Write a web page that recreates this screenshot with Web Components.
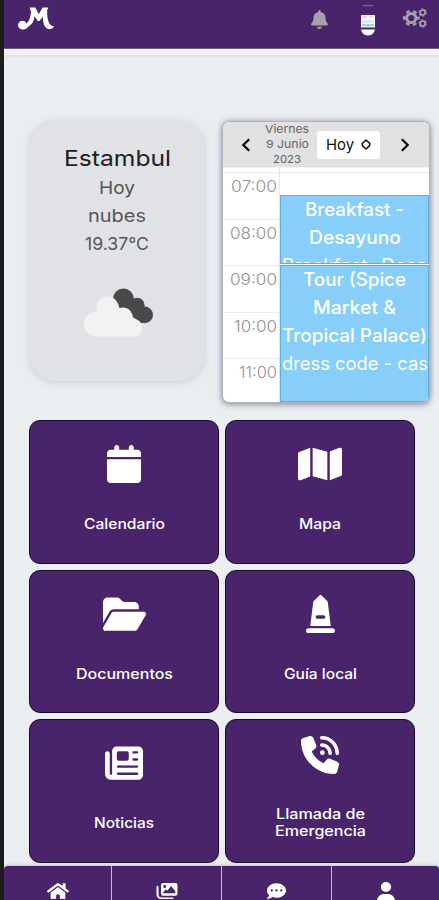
<!DOCTYPE html>
<html lang="es"><head><meta charset="utf-8"><title>Inicio</title>
<style>html,body{margin:0;height:100%;overflow:hidden;background:#eaeef1}body{font-family:Inter,"Open Sans",sans-serif}</style></head>
<body><travel-app></travel-app>
<script>
const define=(name,html,init)=>customElements.define(name,class extends HTMLElement{
  constructor(){super();const t=document.createElement('template');t.innerHTML=html;this.attachShadow({mode:'open'}).append(t.content.cloneNode(true));}
  connectedCallback(){if(init)init(this,this.shadowRoot);}
});
const P={
 bell:['0 0 448 512','<path d="M224 0c-17.7 0-32 14.3-32 32V51.2C119 66 64 130.6 64 208v18.8c0 47-17.3 92.4-48.5 127.6l-7.4 8.3c-8.4 9.4-10.4 22.9-5.3 34.4S19.4 416 32 416H416c12.6 0 24-7.4 29.2-18.9s3.1-25-5.3-34.4l-7.4-8.3C401.3 319.2 384 273.9 384 226.8V208c0-77.4-55-142-128-156.8V32c0-17.7-14.3-32-32-32zm45.3 493.3c12-12 18.7-28.3 18.7-45.3H160c0 17 6.7 33.3 18.7 45.3s28.3 18.7 45.3 18.7s33.3-6.7 45.3-18.7z"/>'],
 gears:['0 0 24 20','<g fill="none" stroke="currentColor"><circle cx="8.3" cy="10" r="4.6" stroke-width="3"/><circle cx="8.3" cy="10" r="7.1" stroke-width="2.4" stroke-dasharray="3.7 3.735" stroke-dashoffset="1.85"/><circle cx="19.7" cy="4.5" r="2.5" stroke-width="1.7"/><circle cx="19.7" cy="4.5" r="3.6" stroke-width="1.1" stroke-dasharray="1.9 1.87"/><circle cx="19.7" cy="15.5" r="2.5" stroke-width="1.7"/><circle cx="19.7" cy="15.5" r="3.6" stroke-width="1.1" stroke-dasharray="1.9 1.87"/></g>'],
 logo:['0 0 38 25','<path d="M12 .5H17.800L21.300 7.500 25.300 .5H31Q31.300 2 30 3.200C29.600 8 30.300 13.500 32.200 17.200Q33.500 19.600 37 20.300C35.800 22.600 33.500 23.400 31 23 26.500 21.500 25.800 16 25.600 10.200L22 14.600H20.300L17 9.600C16.500 14.500 14.500 18.200 10.600 20.400 8.600 23.600 5.500 24 3.300 23.200-.2 22-.9 17.500 1.700 15.300 4 13.600 7.300 14.300 8.300 16.800 10.900 16.300 13 12 13.300 4Q12 3 12 .5Z"/>'],
 avatar:['0 0 16 34','<path fill="#7b6392" d="M3 1h10v1.4H3z"/><path fill="#faf6fc" d="M1 11h14v12.5H1z"/><path fill="#a9dff5" d="M2 16h12v3H2z" opacity=".4"/><path fill="#eeb6dc" d="M3 12h4v2H3zM9 12h4v1.500H9z" opacity=".6"/><path fill="#75d3bd" d="M2 20h12v2.500H2z" opacity=".75"/><path d="M1 25.5h14c-.5 3-3.2 6-7 6s-6.500-3-7-6z"/>'],
 calendar:['0 0 448 512','<path d="M96 32V64H48C21.500 64 0 85.500 0 112v48H448V112c0-26.500-21.500-48-48-48H352V32c0-17.700-14.300-32-32-32s-32 14.300-32 32V64H160V32c0-17.700-14.300-32-32-32S96 14.300 96 32zM448 192H0V464c0 26.500 21.500 48 48 48H400c26.500 0 48-21.500 48-48V192z"/>'],
 map:['0 0 576 512','<path d="M384 476.1L192 421.2V35.9L384 90.8V476.1zm32-1.200V88.400L543.100 37.500c15.800-6.300 32.900 5.300 32.900 22.300V394.600c0 9.800-6 18.600-15.100 22.300L416 474.800zM15.100 95.100L160 37.200V423.600L32.900 474.500C17.100 480.800 0 469.200 0 452.200V117.400c0-9.800 6-18.600 15.100-22.300z"/>'],
 folder:['0 0 576 512','<path d="M88.700 223.800L0 375.800V96C0 60.700 28.700 32 64 32H181.500c17 0 33.300 6.700 45.300 18.700l26.500 26.500c12 12 28.300 18.700 45.300 18.700H416c35.300 0 64 28.700 64 64v32H144c-22.800 0-43.800 12.100-55.300 31.800zm27.600 16.100C122.100 230 132.600 224 144 224H544c11.500 0 22 6.100 27.700 16.100s5.700 22.200-.1 32.100l-112 192C453.900 474 443.400 480 432 480H32c-11.500 0-22-6.100-27.700-16.100s-5.700-22.200 .1-32.100l112-192z"/>'],
 monument:['0 0 384 512','<path d="M180.700 4.700c6.200-6.200 16.400-6.200 22.600 0l80 80c2.500 2.500 4.100 5.800 4.600 9.300l40.200 322H55.900L96.100 94c.4-3.500 2-6.800 4.600-9.300l80-80zM152 272c-13.300 0-24 10.700-24 24s10.700 24 24 24h80c13.300 0 24-10.700 24-24s-10.700-24-24-24H152zM32 448H352c17.700 0 32 14.300 32 32s-14.300 32-32 32H32c-17.700 0-32-14.300-32-32s14.300-32 32-32z"/>'],
 news:['0 0 512 512','<path d="M96 96c0-35.300 28.700-64 64-64H448c35.300 0 64 28.700 64 64V416c0 35.300-28.700 64-64 64H80c-44.200 0-80-35.800-80-80V128c0-17.700 14.300-32 32-32s32 14.300 32 32V400c0 8.800 7.200 16 16 16s16-7.200 16-16V96zm64 24v80c0 13.300 10.700 24 24 24H296c13.300 0 24-10.700 24-24V120c0-13.300-10.700-24-24-24H184c-13.300 0-24 10.700-24 24zm208-8c0 8.800 7.200 16 16 16h48c8.800 0 16-7.200 16-16s-7.200-16-16-16H384c-8.800 0-16 7.200-16 16zm0 96c0 8.800 7.200 16 16 16h48c8.800 0 16-7.200 16-16s-7.200-16-16-16H384c-8.800 0-16 7.200-16 16zM160 304c0 8.800 7.200 16 16 16H432c8.800 0 16-7.200 16-16s-7.200-16-16-16H176c-8.800 0-16 7.200-16 16zm0 96c0 8.800 7.200 16 16 16H432c8.800 0 16-7.200 16-16s-7.200-16-16-16H176c-8.800 0-16 7.200-16 16z"/>'],
 phone:['0 0 512 512','<path d="M280 0C408.100 0 512 103.900 512 232c0 13.300-10.700 24-24 24s-24-10.700-24-24c0-101.600-82.400-184-184-184c-13.300 0-24-10.700-24-24s10.700-24 24-24zm8 192a32 32 0 1 1 0 64 32 32 0 1 1 0-64zm-32-72c0-13.300 10.700-24 24-24c75.100 0 136 60.900 136 136c0 13.300-10.700 24-24 24s-24-10.700-24-24c0-48.600-39.400-88-88-88c-13.300 0-24-10.700-24-24z"/><path d="M164.900 24.600c-7.700-18.600-28-28.500-47.400-23.200l-88 24C12.100 30.200 0 46 0 64C0 311.400 200.600 512 448 512c18 0 33.800-12.100 38.600-29.500l24-88c5.300-19.400-4.600-39.700-23.200-47.400l-96-40c-16.300-6.800-35.200-2.100-46.300 11.600L304.700 368C234.300 334.700 177.300 277.700 144 207.300L193.300 167c13.700-11.200 18.400-30 11.600-46.300l-40-96z"/>'],
 home:['0 0 576 512','<path d="M280.370 148.260L96 300.110V464a16 16 0 0 0 16 16l112.060-.29a16 16 0 0 0 15.920-16V368a16 16 0 0 1 16-16h64a16 16 0 0 1 16 16v95.640a16 16 0 0 0 16 16.050L464 480a16 16 0 0 0 16-16V300L295.670 148.260a12.190 12.190 0 0 0-15.300 0zM571.600 251.470L488 182.560V44.050a12 12 0 0 0-12-12h-56a12 12 0 0 0-12 12v72.610L318.470 43a48 48 0 0 0-61 0L4.340 251.470a12 12 0 0 0-1.600 16.900l25.500 31A12 12 0 0 0 45.150 301l235.220-193.740a12.190 12.190 0 0 1 15.300 0L530.900 301a12 12 0 0 0 16.900-1.600l25.500-31a12 12 0 0 0-1.700-16.930z"/>'],
 images:['0 0 22 18','<path fill-rule="evenodd" d="M7 1h12.500Q21.500 1 21.500 3v9.500q0 2-2 2H7q-2 0-2-2V3Q5 1 7 1zm1.700 2.300a1.500 1.500 0 1 0 0 3 1.500 1.500 0 1 0 0-3zM7.300 12h12V9.500l-4.200-5.200-3.800 5-1.500-1.700-2.500 3.200z"/><path d="M.5 5Q.5 4 1.500 4t1 1v8q0 3.500 3.500 3.500h10.500q1 0 1 .8t-1 .7H5.500Q.5 18 .5 13z"/>'],
 chat:['0 0 512 512','<path fill-rule="evenodd" d="M256 32C114.600 32 0 125.100 0 240c0 49.600 21.400 95 57 130.700C44.500 421.100 2.700 466 2.200 466.500c-2.200 2.300-2.800 5.700-1.500 8.700S4.800 480 8 480c66.300 0 116-31.800 140.600-51.400 32.700 12.300 69 19.400 107.400 19.400 141.400 0 256-93.100 256-208S397.400 32 256 32zM128 208a32 32 0 1 0 0 64 32 32 0 1 0 0-64zm128 0a32 32 0 1 0 0 64 32 32 0 1 0 0-64zm128 0a32 32 0 1 0 0 64 32 32 0 1 0 0-64z"/>'],
 user:['0 0 448 512','<path d="M224 256A128 128 0 1 0 224 0a128 128 0 1 0 0 256zm-45.700 48C79.800 304 0 383.800 0 482.300C0 498.700 13.300 512 29.700 512H418.300c16.400 0 29.700-13.300 29.700-29.700C448 383.800 368.200 304 269.700 304H178.300z"/>'],
 left:['0 0 10 14','<path d="M8.200 1.200 2.300 7l5.900 5.800" fill="none" stroke="currentColor" stroke-width="2.300"/>'],
 right:['0 0 10 14','<path d="M1.800 1.200 7.700 7l-5.900 5.800" fill="none" stroke="currentColor" stroke-width="2.300"/>'],
 sort:['0 0 10 12','<path d="M1.300 4.800 5 1l3.700 3.800v2.400L5 11 1.300 7.200z" fill="none" stroke="currentColor" stroke-width="1.500"/>'],
 cloud:['0 0 70 50','<g fill="#48494b"><circle cx="40" cy="11" r="10.500"/><circle cx="54" cy="17.500" r="7.500"/><circle cx="61.500" cy="27.500" r="8.500"/><path d="M34 18 45 6 66 33 58 36z"/></g><path fill="#f2f2f2" d="M13 49.500h36.500c5.300 0 9.500-2.600 9.700-8.500.1-5.500-3.900-9.400-9.400-10C49.500 23 43 18 36 20.500 34.500 13 29 8.500 24 8.500 16.500 8.500 11.800 15 12.800 23.600 5 24 0 29.500 0 37c0 7.500 5.500 12.500 13 12.500z"/>']
};
define('app-icon','<style>:host{display:block;flex:none}svg{display:block;width:100%;height:100%;fill:currentColor;overflow:visible}</style>',(h,r)=>{
  if(r.querySelector('svg'))return;const [vb,body]=P[h.getAttribute('name')];const [w,t]=h.getAttribute('size').split('x');
  h.style.width=w+'px';h.style.height=t+'px';
  r.innerHTML+=`<svg viewBox="${vb}" preserveAspectRatio="none">${body}</svg>`;});
define('fit-text','<style>:host{display:block;white-space:nowrap;flex:none}span{display:inline-block;transform-origin:0 50%}</style><span><slot></slot></span>',(h,r)=>{
  const w=+h.getAttribute('w'),s=r.querySelector('span');h.style.width=w+'px';
  const fit=()=>{const n=s.offsetWidth;if(n)s.style.transform=`scaleX(${w/s.getBoundingClientRect().width*(new DOMMatrix(getComputedStyle(s).transform).a)})`;};
  requestAnimationFrame(fit);fit();});
define('top-bar',`<style>:host{display:flex;box-sizing:border-box;height:48px;flex:none;background:#49246b;box-shadow:0 1px 0 #6f5b88,0 2px 0 #f0f0f6,0 7px 0 #f0f1f5,0 9px 1px #e1e2eb;color:#fff;padding:7px 12px 0 14px;align-items:flex-start;position:relative}
 .sp{flex:1}.g{color:#a7a0ad}.b{margin:3px 32px 0 0}.a{margin:-3px 27px 0 0}.s{margin-top:1px}</style>
 <app-icon name="logo" size="37x24"></app-icon><span class="sp"></span><app-icon class="g b" name="bell" size="17x19"></app-icon><app-icon class="a" name="avatar" size="16x34"></app-icon><app-icon class="g s" name="gears" size="24x20"></app-icon>`);
define('weather-card',`<style>:host{display:flex;flex-direction:column;align-items:center;box-sizing:border-box;width:174px;height:260px;margin-top:1px;border-radius:25px;background:#e1e2e6;box-shadow:0 1px 7px #bfc3cacc;padding-top:22px;color:#555558;font-size:17.500px;line-height:28px}
 .c{font-size:22px;color:#202022;line-height:30px;padding-bottom:1px}app-icon{margin:30px 0 0 3px}</style>
 <fit-text class="c" w="107">Estambul</fit-text><fit-text w="36">Hoy</fit-text><fit-text w="58">nubes</fit-text><fit-text w="64">19.37°C</fit-text><app-icon name="cloud" size="69x49"></app-icon>`);
define('day-event',`<style>:host{display:flex;flex-direction:column;align-items:center;box-sizing:border-box;overflow:hidden;background:#87cefa;border:1px solid #5daee0;color:#fff;line-height:28px;font-size:18px;font-weight:500}</style><slot></slot>`);
define('day-planner',`<style>:host{display:flex;flex-direction:column;box-sizing:border-box;width:206px;height:280px;border-radius:6px;background:#fff;box-shadow:0 0 0 1px #b1b3c1,0 1px 6px 1px #777b8f;overflow:hidden;margin-top:2px}
 header{height:45px;flex:none;background:#e1e1e1;display:flex;align-items:center;padding:0 18px 0 18px;color:#111;box-sizing:border-box}
 .d{display:flex;flex-direction:column;align-items:center;line-height:15px;font-size:11px;color:#646466;margin-left:14px;width:44px}
 .t{display:flex;align-items:center;justify-content:space-between;box-sizing:border-box;width:63px;height:28px;margin:0 20px 0 8px;padding:0 9px;background:#fff;border-radius:3px;font-size:15px;line-height:28px}
 .g{display:grid;grid-template-columns:57px 1fr;flex:1;min-height:0;box-sizing:border-box;border-top:1px solid #f3f3f3}
 .h{padding-top:4px;border-right:1px solid #e6e6e6;box-sizing:border-box;overflow:hidden}
 .r{height:46.500px;box-sizing:border-box;border-top:1px solid #ececec;display:flex;justify-content:flex-end;padding-right:2px;color:#919191;font-size:16.500px;line-height:26px;font-weight:300}
 .e{display:flex;flex-direction:column;border-top:1px solid #ececec;margin-top:4px;padding-top:22px;min-width:0}
 .one{height:69px;flex:none}.two{margin-top:1px;flex:1}.n{font-weight:400}.one,.two{width:149px}</style>
 <header><app-icon name="left" size="10x14"></app-icon><div class="d"><fit-text w="44">Viernes</fit-text><fit-text w="43">9 Junio</fit-text><fit-text w="28">2023</fit-text></div><div class="t"><fit-text w="28">Hoy</fit-text><app-icon name="sort" size="10x11"></app-icon></div><app-icon name="right" size="10x14"></app-icon></header>
 <div class="g"><div class="h"><div class="r"><fit-text w="46">07:00</fit-text></div><div class="r"><fit-text w="47">08:00</fit-text></div><div class="r"><fit-text w="47">09:00</fit-text></div><div class="r"><fit-text w="43">10:00</fit-text></div><div class="r"><fit-text w="38">11:00</fit-text></div></div>
 <div class="e"><day-event class="one"><fit-text w="99">Breakfast -</fit-text><fit-text w="92">Desayuno</fit-text><fit-text class="n" w="145">Breakfast- Desa</fit-text></day-event><day-event class="two"><fit-text w="103">Tour (Spice</fit-text><fit-text w="83">Market &amp;</fit-text><fit-text w="145">Tropical Palace)</fit-text><fit-text class="n" w="146">dress code - cas</fit-text></day-event></div></div>`);
define('menu-tile',`<style>:host{display:flex;flex-direction:column;align-items:center;box-sizing:border-box;height:143.500px;border:1.500px solid #170a2b;border-radius:11px;background:#49246b;color:#fff;font-size:14px;line-height:17px;font-weight:450}
 .i{height:94px;box-sizing:border-box;padding-top:24px}:host([tall]) .i{height:85px;padding-top:16px}</style><div class="i"><slot name="icon"></slot></div><slot></slot>`);
define('bottom-nav',`<style>:host{display:grid;grid-template-columns:107px 109px 109px 1fr;gap:1px;flex:none;height:34px;background:#c7bbd3;border-radius:4px 4px 0 0;overflow:hidden;box-shadow:0 -1px 3px #c8bed0;color:#fff}
 div{background:#49246b;display:flex;justify-content:center;padding-top:16px}</style>
 <div><app-icon name="home" size="22x18"></app-icon></div><div><app-icon name="images" size="22x17"></app-icon></div><div><app-icon name="chat" size="19x18"></app-icon></div><div><app-icon name="user" size="18x20"></app-icon></div>`);
define('travel-app',`<style>:host{display:flex;flex-direction:column;box-sizing:border-box;width:439px;height:900px;border-left:4px solid #1e1c1d;background:#eaeef1;overflow:hidden}
 .top{display:flex;gap:19px;padding:72px 0 0 26px;height:372px;box-sizing:border-box;flex:none}
 main{display:grid;grid-template-columns:190px 190px;grid-auto-rows:143.500px;gap:6px;padding:0 0 3px 25px;flex:none;height:446px;box-sizing:border-box}</style>
 <top-bar></top-bar><div class="top"><weather-card></weather-card><day-planner></day-planner></div>
 <main>
 <menu-tile><app-icon slot="icon" name="calendar" size="34x38"></app-icon><fit-text w="81">Calendario</fit-text></menu-tile>
 <menu-tile><app-icon slot="icon" name="map" size="44x38"></app-icon><fit-text w="42">Mapa</fit-text></menu-tile>
 <menu-tile><app-icon slot="icon" name="folder" size="43x38"></app-icon><fit-text w="97">Documentos</fit-text></menu-tile>
 <menu-tile><app-icon slot="icon" name="monument" size="29x38"></app-icon><fit-text w="73">Guía local</fit-text></menu-tile>
 <menu-tile><app-icon slot="icon" name="news" size="38x38"></app-icon><fit-text w="60">Noticias</fit-text></menu-tile>
 <menu-tile tall><app-icon slot="icon" name="phone" size="38x38"></app-icon><fit-text w="89">Llamada de</fit-text><fit-text w="91">Emergencia</fit-text></menu-tile>
 </main><bottom-nav></bottom-nav>`);
</script></body></html>
